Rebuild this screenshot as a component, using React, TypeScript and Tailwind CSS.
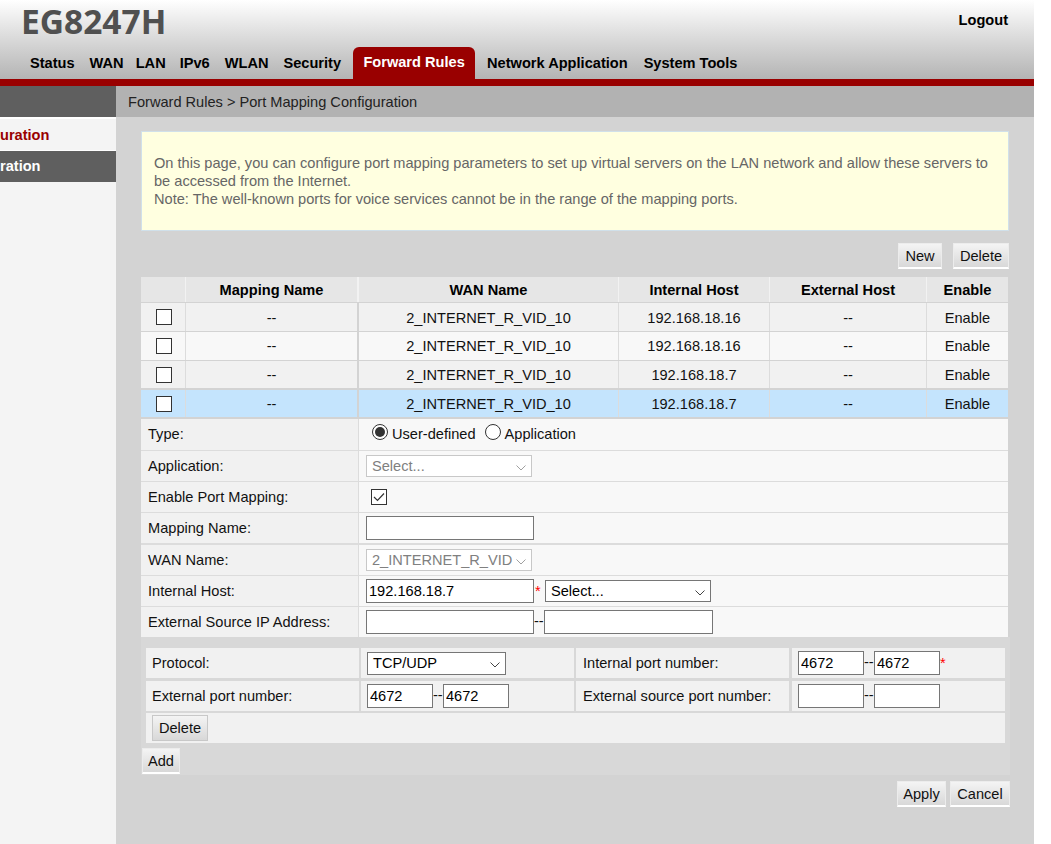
import type { ReactNode } from 'react';

const tabs = [
  { name: 'Status', gap: 'mr-[15px]' },
  { name: 'WAN', gap: 'mr-[12px]' },
  { name: 'LAN', gap: 'mr-[14px]' },
  { name: 'IPv6', gap: 'mr-[15px]' },
  { name: 'WLAN', gap: 'mr-[15px]' },
  { name: 'Security', gap: 'mr-[12px]' },
];
const hosts = ['192.168.18.16', '192.168.18.16', '192.168.18.7', '192.168.18.7'];
const rowStyles = [
  'h-[28px] mb-px bg-[#f1f1f1] leading-[30px]',
  'h-[28px] mb-px bg-[#f8f8f8] leading-[29px]',
  'h-[27px] mb-[2px] bg-[#f1f1f1] leading-[29px]',
  'h-[27px] mb-[2px] bg-[#c4e4fd] leading-[29px]',
];

function Button({ label, className }: { label: string; className: string }) {
  return (
    <button
      type="button"
      className={`h-[26px] border bg-gradient-to-b from-[#f4f4f4] to-[#d8d8d8] pt-px text-[14.6px] leading-none text-[#111] ${className}`}
    >
      {label}
    </button>
  );
}

function TextBox({ value, className }: { value?: string; className: string }) {
  return (
    <input
      readOnly
      value={value ?? ''}
      className={`h-[24px] border border-[#767676] bg-white px-[2px] text-[14.6px] text-black outline-none ${className}`}
    />
  );
}

function Chevron({ color }: { color: string }) {
  return (
    <svg width="10" height="6" viewBox="0 0 10 6" fill="none" className="absolute right-[5px] top-[9px]">
      <path d="M0.5 0.5L5 5L9.5 0.5" stroke={color} strokeWidth="1" />
    </svg>
  );
}

function SelectBox({ text, disabled, className }: { text: string; disabled?: boolean; className: string }) {
  return (
    <div
      className={`relative overflow-hidden whitespace-nowrap border bg-white pl-[5px] text-[14.6px] leading-[20px] ${
        disabled ? 'border-[#c8c8c8] text-[#808080]' : 'border-[#767676] text-black'
      } ${className}`}
    >
      {text}
      <Chevron color={disabled ? '#a0a0a0' : '#444444'} />
    </div>
  );
}

function FormRow({ label, mb, h, children }: { label: string; mb: string; h: string; children: ReactNode }) {
  return (
    <div className={`flex ${h} ${mb}`}>
      <div className="flex w-[217px] items-center bg-[#f1f1f1] pl-[7px] pt-px text-[14.6px] text-[#111]">{label}</div>
      <div className="ml-px flex flex-1 items-center bg-[#f8f8f8] pl-[7px]">{children}</div>
    </div>
  );
}

function PortRow({ label, label2, left, right, mb }: { label: string; label2: string; left: ReactNode; right: ReactNode; mb: string }) {
  return (
    <div className={`flex h-[30px] text-[14.6px] text-[#111] ${mb}`}>
      <div className="flex w-[213px] items-center bg-[#f1f1f1] pl-[6px] pt-px">{label}</div>
      <div className="ml-[2px] flex w-[213px] items-center bg-[#f1f1f1] pl-[6px]">{left}</div>
      <div className="ml-[2px] flex w-[213px] items-center bg-[#f1f1f1] pl-[7px] pt-px">{label2}</div>
      <div className="ml-[3px] flex w-[213px] items-center bg-[#f1f1f1] pl-[6px]">{right}</div>
    </div>
  );
}

export default function App() {
  return (
    <div className="h-[844px] w-[1051px] overflow-hidden bg-white font-['Liberation_Sans',Arial,sans-serif]">
      <div className="flex h-[844px] w-[1034px] flex-col overflow-hidden bg-[#d3d3d3]">
        <header className="relative h-[79px] shrink-0 bg-gradient-to-b from-white to-[#b4b4b4]">
          <div className="pl-[21px] font-['Open_Sans',sans-serif] text-[33.5px] font-bold leading-[42px] text-[#505050]">EG8247H</div>
          <div className="absolute right-[26px] top-[10px] text-[14.6px] font-bold text-black">Logout</div>
          <nav className="absolute bottom-0 left-[30px] flex items-end text-[14.6px] font-bold text-black">
            {tabs.map((t) => (
              <span key={t.name} className={`h-[26px] leading-[20px] ${t.gap}`}>{t.name}</span>
            ))}
            <span className="mr-[12px] h-[32px] w-[122px] rounded-t-[6px] bg-[#990000] text-center leading-[31px] text-white">Forward Rules</span>
            <span className="mr-[16px] h-[26px] leading-[20px]">Network Application</span>
            <span className="h-[26px] leading-[20px]">System Tools</span>
          </nav>
        </header>
        <div className="h-[7px] shrink-0 bg-[#990000]" />
        <div className="flex flex-1">
          <aside className="w-[116px] shrink-0 bg-[#f4f4f4]">
            <div className="h-[31px] bg-[#5f5f5f]" />
            <div className="h-[2px] bg-white" />
            <div className="h-[31px] text-[14.6px] font-bold leading-[32px] text-[#990000]">uration</div>
            <div className="h-[32px] border-t border-white bg-[#5f5f5f] text-[14.6px] font-bold leading-[31px] text-white">ration</div>
          </aside>
          <main className="flex-1">
            <div className="h-[31px] bg-[#b2b2b2] pl-[12px] text-[14.6px] leading-[32px] text-[#222]">Forward Rules &gt; Port Mapping Configuration</div>
            <div className="pl-[25px] pt-[14px]">
              <div className="h-[100px] w-[868px] border border-[#d0e0ea] bg-[#ffffe0] pl-[12px] pt-[22px] text-[14.6px] leading-[18px] text-[#666]">
                On this page, you can configure port mapping parameters to set up virtual servers on the LAN network and allow these servers to be accessed from the Internet.
                <br />
                Note: The well-known ports for voice services cannot be in the range of the mapping ports.
              </div>
              <div className="flex h-[46px] w-[868px] items-start justify-end gap-[11px] pt-[12px]">
                <Button label="New" className="w-[44px] border-[#ececec] border-b-2 border-b-white" />
                <Button label="Delete" className="w-[56px] border-[#ececec] border-b-2 border-b-white" />
              </div>

              <div className="w-[867px] text-[14.6px] text-[#111]">
                <div className="mb-px flex h-[25px] bg-[#e6e6e6] font-bold text-black">
                  <div className="w-[44px]" />
                  <div className="w-[172px] border-l border-[#f2f2f2] text-center leading-[26px]">Mapping Name</div>
                  <div className="w-[261px] border-l-2 border-[#f2f2f2] text-center leading-[26px]">WAN Name</div>
                  <div className="w-[151px] border-l border-[#f2f2f2] text-center leading-[26px]">Internal Host</div>
                  <div className="w-[157px] border-l border-[#f2f2f2] text-center leading-[26px]">External Host</div>
                  <div className="w-[82px] border-l border-[#f2f2f2] text-center leading-[26px]">Enable</div>
                </div>
                {hosts.map((host, i) => (
                  <div key={i} className={`flex ${rowStyles[i]}`}>
                    <div className="flex w-[44px] items-center justify-center pl-[1px]">
                      <span className="block h-[16px] w-[16px] border border-[#333] bg-white" />
                    </div>
                    <div className="w-[172px] border-l border-[#dcdcdc] text-center">--</div>
                    <div className="w-[261px] border-l-2 border-[#d3d3d3] text-center">2_INTERNET_R_VID_10</div>
                    <div className="w-[151px] border-l border-[#dcdcdc] text-center">{host}</div>
                    <div className="w-[157px] border-l border-[#dcdcdc] text-center">--</div>
                    <div className="w-[82px] border-l border-[#dcdcdc] text-center">Enable</div>
                  </div>
                ))}
              </div>

              <div className="w-[867px] bg-[#dcdcdc]">
                <FormRow label="Type:" h="h-[31px]" mb="mb-px">
                  <div className="flex items-center pl-[6px] text-[14.6px] text-[#111]">
                    <span className="mb-[4px] flex h-[16px] w-[16px] items-center justify-center rounded-full border border-[#333] bg-white">
                      <span className="h-[10px] w-[10px] rounded-full bg-[#333]" />
                    </span>
                    <span className="ml-[4px]">User-defined</span>
                    <span className="mb-[4px] ml-[9px] h-[16px] w-[16px] rounded-full border border-[#333] bg-white" />
                    <span className="ml-[4px]">Application</span>
                  </div>
                </FormRow>
                <FormRow label="Application:" h="h-[30px]" mb="mb-px">
                  <SelectBox text="Select..." disabled className="h-[22px] w-[166px]" />
                </FormRow>
                <FormRow label="Enable Port Mapping:" h="h-[30px]" mb="mb-px">
                  <span className="ml-[5px] flex h-[16px] w-[16px] items-center justify-center border border-[#333] bg-white">
                    <svg width="12" height="10" viewBox="0 0 12 10" fill="none">
                      <path d="M1 5L4.5 8.5L11 1.5" stroke="#333" strokeWidth="1.2" />
                    </svg>
                  </span>
                </FormRow>
                <FormRow label="Mapping Name:" h="h-[30px]" mb="mb-[2px]">
                  <TextBox className="w-[168px]" />
                </FormRow>
                <FormRow label="WAN Name:" h="h-[30px]" mb="mb-px">
                  <SelectBox text="2_INTERNET_R_VID" disabled className="h-[22px] w-[166px]" />
                </FormRow>
                <FormRow label="Internal Host:" h="h-[30px]" mb="mb-px">
                  <TextBox value="192.168.18.7" className="w-[168px]" />
                  <span className="h-[16px] w-[11px] pl-px text-[14.6px] leading-[16px] text-[#ff0000]">*</span>
                  <SelectBox text="Select..." className="h-[22px] w-[166px]" />
                </FormRow>
                <FormRow label="External Source IP Address:" h="h-[30px]" mb="mb-0">
                  <TextBox className="w-[168px]" />
                  <span className="w-[10px] text-[14.6px] text-[#111]">--</span>
                  <TextBox className="w-[169px]" />
                </FormRow>
              </div>

              <div className="h-[138px] w-[869px] bg-[#d8d8d8] pt-[11px]">
                <div className="pl-[5px]">
                  <PortRow
                    label="Protocol:"
                    label2="Internal port number:"
                    mb="mb-[3px]"
                    left={<SelectBox text="TCP/UDP" className="h-[23px] w-[139px]" />}
                    right={
                      <>
                        <TextBox value="4672" className="w-[66px]" />
                        <span className="w-[10px]">--</span>
                        <TextBox value="4672" className="w-[66px]" />
                        <span className="h-[16px] text-[14.6px] leading-[16px] text-[#ff0000]">*</span>
                      </>
                    }
                  />
                  <PortRow
                    label="External port number:"
                    label2="External source port number:"
                    mb="mb-[2px]"
                    left={
                      <>
                        <TextBox value="4672" className="w-[66px]" />
                        <span className="w-[10px]">--</span>
                        <TextBox value="4672" className="w-[66px]" />
                      </>
                    }
                    right={
                      <>
                        <TextBox className="w-[66px]" />
                        <span className="w-[10px]">--</span>
                        <TextBox className="w-[66px]" />
                      </>
                    }
                  />
                  <div className="flex h-[30px] w-[859px] items-center bg-[#f1f1f1] pl-[6px]">
                    <Button label="Delete" className="w-[56px] border-[#c8c8c8]" />
                  </div>
                </div>
                <Button label="Add" className="ml-px mt-[5px] w-[38px] border-[#ececec] border-b-2 border-b-white" />
              </div>
              <div className="flex w-[869px] justify-end gap-[4px] pt-[6px]">
                <Button label="Apply" className="w-[49px] border-[#ececec] border-b-2 border-b-white" />
                <Button label="Cancel" className="w-[60px] border-[#ececec] border-b-2 border-b-white" />
              </div>
            </div>
          </main>
        </div>
      </div>
    </div>
  );
}
